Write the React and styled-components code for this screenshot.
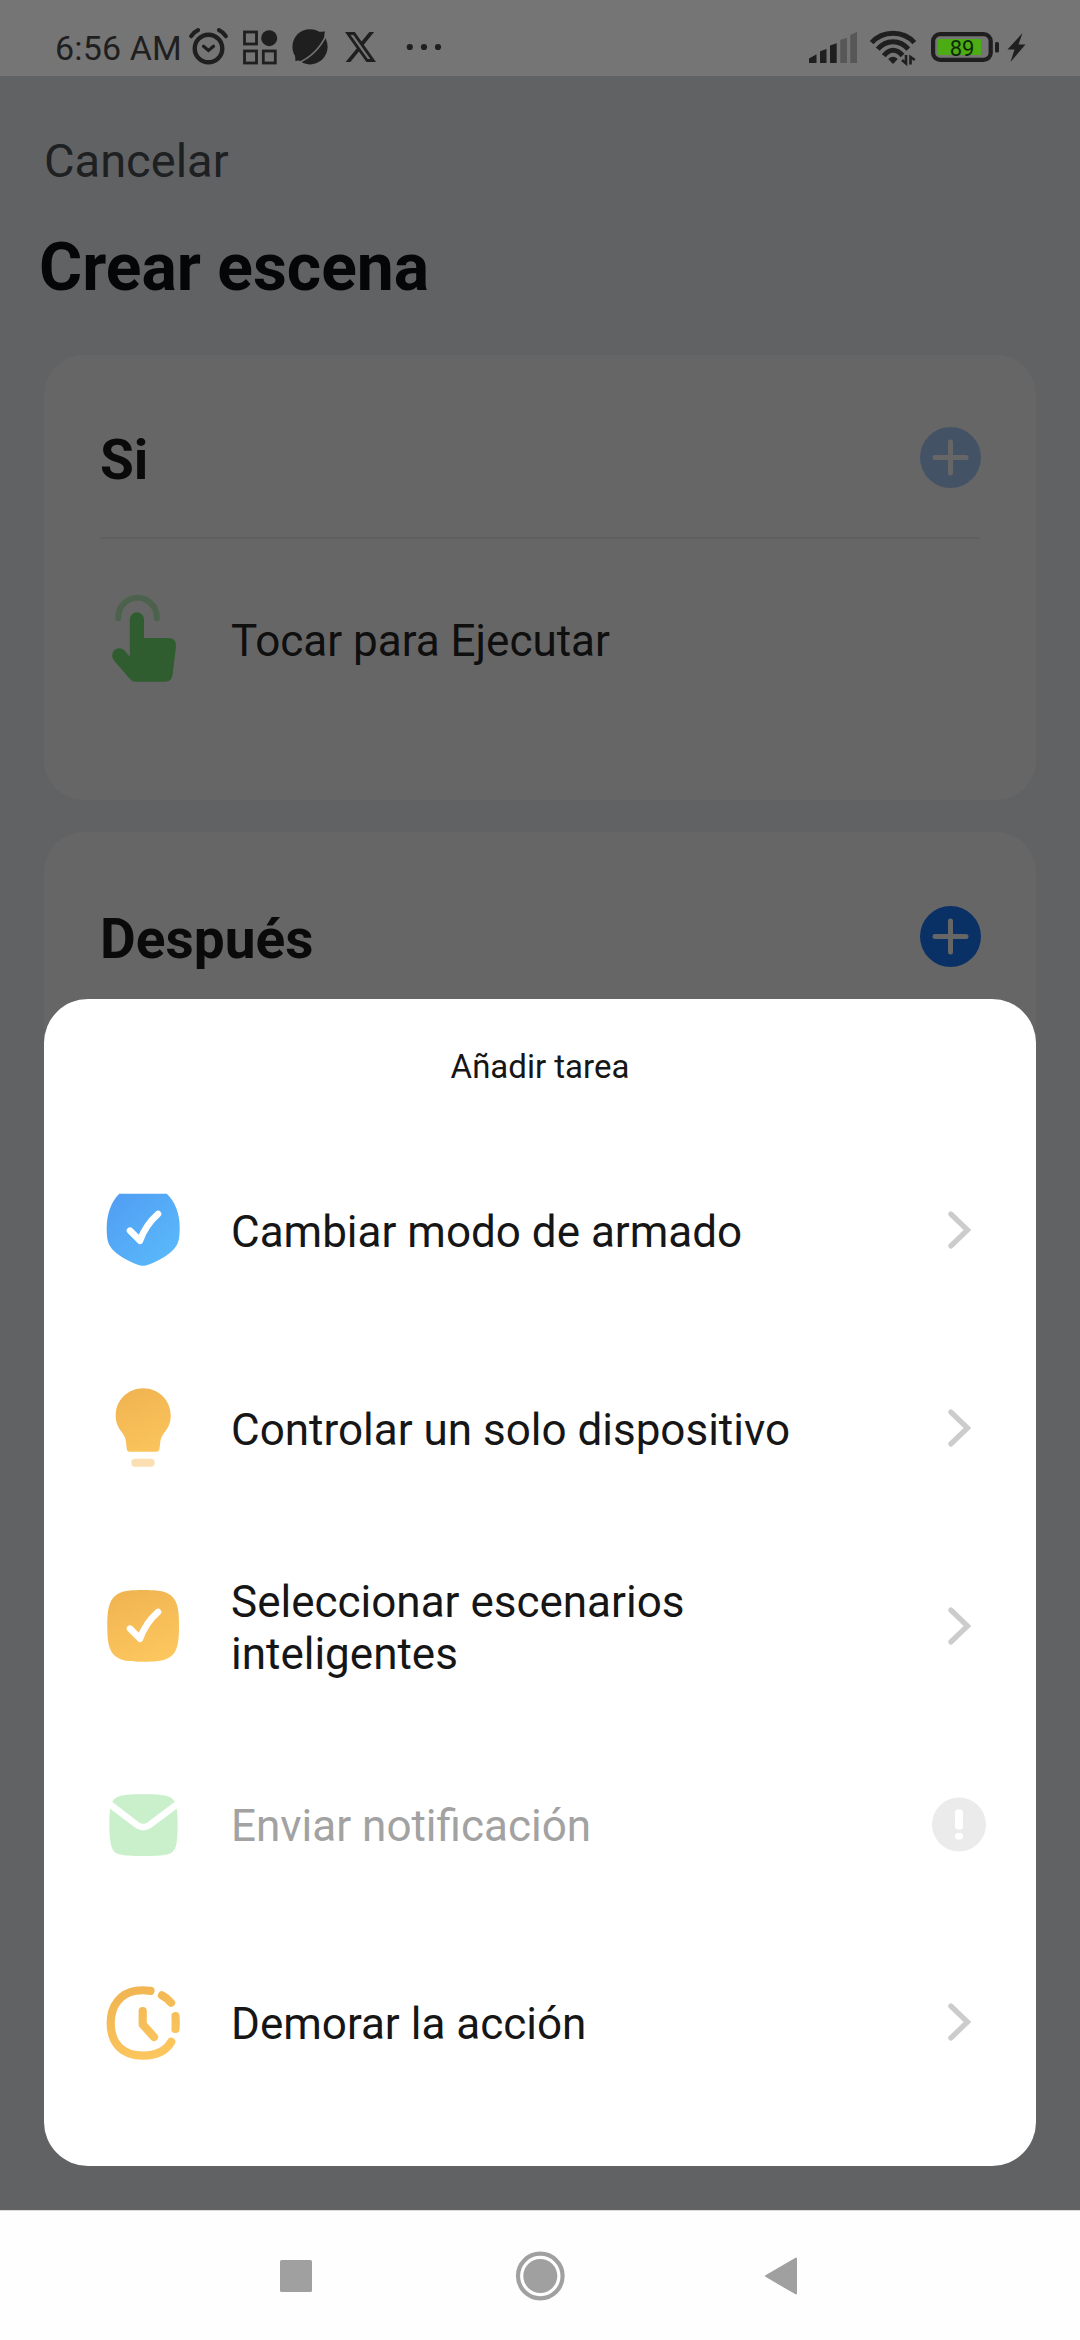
import React from 'react';
import styled, { createGlobalStyle } from 'styled-components';

const GlobalStyle = createGlobalStyle`
  * {
    box-sizing: border-box;
  }

  body {
    margin: 0;
    font-family: Roboto, 'Noto Sans', sans-serif;
    background: #ffffff;
  }
`;

// Styled Components
const Screen = styled.div`
  width: 1080px;
  height: 2340px;
  display: flex;
  flex-direction: column;
  overflow: hidden;
`;

const StatusBar = styled.header`
  height: 76px;
  flex: none;
  display: flex;
  justify-content: space-between;
  padding: 28px 54px 0 55px;
  background: #757575;
  color: #1f1f1f;
`;

const StatusGroup = styled.div`
  display: flex;
  height: 38px;
  align-items: center;
`;

const Clock = styled.span`
  width: 134px;
  padding-top: 2px;
  font-size: 34px;
  line-height: 40px;
  letter-spacing: 0.15px;
  white-space: nowrap;
`;

const Page = styled.main`
  position: relative;
  flex: 1;
  min-height: 0;
  overflow: hidden;
  padding: 0 44px;
  background: #f2f5fa;
`;

const CancelButton = styled.button`
  display: block;
  margin: 57px 0 0;
  padding: 0;
  border: none;
  background: none;
  color: #4e5156;
  font-family: inherit;
  font-size: 47px;
  line-height: 56px;
`;

const PageTitle = styled.h1`
  margin: 41px 0 50px -5px;
  color: #0d0f12;
  font-size: 66px;
  line-height: 75px;
  font-weight: 700;
`;

const Card = styled.section`
  height: ${props => props.$height}px;
  margin-bottom: 32px;
  padding: 0 56px;
  border-radius: 40px;
  background: #ffffff;
`;

const CardHeader = styled.div`
  display: flex;
  align-items: center;
  justify-content: space-between;
  height: 184px;
  padding-top: ${props => (props.$divided ? 23 : 27)}px;
  border-bottom: 2px solid ${props => (props.$divided ? '#eeeeef' : 'transparent')};
`;

const CardTitle = styled.h2`
  margin: 0;
  padding-top: 5px;
  color: #191919;
  font-size: 55px;
  line-height: 64px;
  font-weight: 700;
`;

const AddButton = styled.button`
  width: 61px;
  height: 61px;
  margin: 0 -1px 0 0;
  padding: 0;
  border: none;
  border-radius: 50%;
  background: ${props => (props.$muted ? '#aaccff' : '#1a7bff')};
  color: #ffffff;
`;

const ConditionRow = styled.div`
  display: flex;
  align-items: center;
  height: 198px;
`;

const ConditionText = styled.span`
  margin-left: 43px;
  padding-top: 5px;
  color: #262626;
  font-size: 44px;
`;

const Scrim = styled.div`
  position: absolute;
  inset: 0;
  display: flex;
  align-items: flex-end;
  padding: 0 44px 44px;
  background: rgba(0, 0, 0, 0.6);
`;

const Sheet = styled.div`
  width: 992px;
  height: 1167px;
  border-radius: 44px;
  background: #ffffff;
`;

const SheetTitle = styled.div`
  height: 132px;
  padding-top: 2px;
  color: #161616;
  font-size: 33px;
  line-height: 132px;
  text-align: center;
`;

const TaskRow = styled.div`
  display: flex;
  align-items: center;
  height: 198px;
  padding: 0 50px 0 55px;
`;

const TaskLabel = styled.span`
  width: 640px;
  margin-left: 44px;
  padding-top: 4px;
  color: ${props => (props.$disabled ? '#a2a2a2' : '#161616')};
  font-size: 44px;
  line-height: 52px;
`;

const Trailing = styled.div`
  display: flex;
  margin-left: auto;
`;

const NavBar = styled.nav`
  display: flex;
  flex: none;
  align-items: center;
  justify-content: center;
  gap: 194px;
  height: 130px;
  border-top: 1px solid #dcdcdc;
  background: #fefefe;
`;

const Icon = styled.svg`
  display: block;
  flex: none;
  overflow: visible;
  margin-left: ${props => props.$left || 0}px;
`;

// Status bar icons
const AlarmIcon = () => (
  <Icon width="40" height="38" fill="none" stroke="currentColor" strokeLinecap="round">
    <circle cx="19.5" cy="20.5" r="13.8" strokeWidth="4.4" />
    <path d="M2.2 8.2Q5 4 9 2.2M30 2.2Q34 4 36.8 8.2" strokeWidth="4.2" />
    <path d="M14.5 18.2L19.5 22.5L24.5 18.2" strokeWidth="3.2" />
  </Icon>
);

const GridIcon = () => (
  <Icon width="34" height="38" $left={14} fill="none" stroke="currentColor" strokeWidth="2.8">
    <rect x="1.5" y="4" width="12" height="12" />
    <rect x="1.5" y="23" width="12" height="12" />
    <rect x="20.3" y="23" width="12" height="12" />
    <circle cx="26.2" cy="10.2" r="8" fill="currentColor" stroke="none" />
  </Icon>
);

const PlanetIcon = () => (
  <Icon width="36" height="38" $left={15}>
    <circle cx="18" cy="18.8" r="17.6" fill="currentColor" />
    <path d="M26 4L33 3.6Q32.5 9 30 14L9 32L3.4 33L3 25Z" fill="currentColor" />
    <path d="M34.5 6.5C28 21 18 30 5 35.5" fill="none" stroke="#757575" strokeWidth="1.7" />
  </Icon>
);

const XLogo = () => (
  <Icon width="31" height="30" $left={17} viewBox="1.25 2.25 21.6 19.5" preserveAspectRatio="none">
    <path
      fill="currentColor"
      d="M18.244 2.25h3.308l-7.227 8.26 8.502 11.24H16.17l-5.214-6.817L4.99 21.75H1.68l7.73-8.835L1.254 2.25H8.08l4.713 6.231zm-1.161 17.52h1.833L7.084 4.126H5.117z"
    />
  </Icon>
);

const MoreDots = () => (
  <Icon width="36" height="38" $left={30} fill="currentColor">
    <circle cx="3.8" cy="19" r="3.1" />
    <circle cx="18" cy="19" r="3.1" />
    <circle cx="32" cy="19" r="3.1" />
  </Icon>
);

const SignalIcon = () => (
  <Icon width="48" height="38" fill="currentColor">
    <path d="M0 35V30.5L7.5 26.3V35Z" />
    <path d="M11 35V23.2L17.5 21V35Z" />
    <path d="M21 35V17.5L27.7 15.2V35Z" />
    <path d="M31.3 35V12L38 9.7V35ZM41.3 35V7L48 4V35Z" fill="#575757" />
  </Icon>
);

const WifiIcon = () => (
  <Icon width="47" height="38" $left={13} fill="none" stroke="currentColor" strokeWidth="5">
    <path d="M1.7 14.6Q10 5.2 23 5.2Q36 5.2 44.3 14.6" />
    <path d="M7.7 21.2Q14 13.7 23 13.7Q32 13.7 38.3 21.2" />
    <path d="M13.8 27.8Q18 22.2 23 22.2Q28 22.2 32.6 27.5" />
    <path d="M18.2 31Q23 26.5 27.8 31L23 36Z" fill="currentColor" stroke="none" />
    <path d="M36 27V35.5L32 32M40.5 36.5V29L44.8 32" strokeWidth="2.6" />
  </Icon>
);

const BatteryIcon = () => (
  <Icon width="69" height="38" $left={14}>
    <rect x="2.1" y="6.1" width="57.6" height="25.8" rx="7" fill="none" stroke="currentColor" strokeWidth="4.2" />
    <rect x="7" y="11" width="43" height="16" fill="#4dab14" />
    <rect x="64" y="14" width="4" height="10.5" rx="1.5" fill="currentColor" />
    <text x="31" y="28" textAnchor="middle" fontSize="22" fill="#0d2a06">89</text>
  </Icon>
);

const BoltIcon = () => (
  <Icon width="19" height="38" $left={7}>
    <path d="M15.5 5L0.5 21.5H7.5L3.5 34L18.5 16.5H11.5Z" fill="currentColor" />
  </Icon>
);

// Page icons
const PlusIcon = () => (
  <Icon width="61" height="61" stroke="currentColor" strokeWidth="5" strokeLinecap="round">
    <path d="M15 30.5H46M30.5 15V46" />
  </Icon>
);

const TouchIcon = () => (
  <Icon width="88" height="88" viewBox="0 0 88 88">
    <path d="M18.3 24.2V22.9A19.2 19.2 0 0 1 56.7 22.9V24.2" fill="none" stroke="#bdf5bd" strokeWidth="6" strokeLinecap="round" />
    <path
      d="M29.800 25.400A7.100 7.100 0 0 1 44 25.400V44H68Q76.800 44 76 53L72.500 81Q71.500 87.700 65.500 87.700H35.500Q31.500 87.700 29 84L14 66.500Q10.500 61.500 13.500 57C17.500 52.500 23 54 25.500 57.500L29.800 63Z"
      fill="#78e878"
    />
  </Icon>
);

// Sheet icons
const Gradients = () => (
  <defs>
    <linearGradient id="blue" x1="0" y1="0" x2="1" y2="1">
      <stop offset="0" stopColor="#509cf3" />
      <stop offset="1" stopColor="#5bbcfb" />
    </linearGradient>
    <linearGradient id="amber" gradientUnits="userSpaceOnUse" x1="20" y1="4" x2="50" y2="84">
      <stop offset="0" stopColor="#efb350" />
      <stop offset="1" stopColor="#fdc75f" />
    </linearGradient>
  </defs>
);

const TaskIcon = ({ children }) => (
  <Icon width="88" height="88" viewBox="0 0 88 88" fill="none">
    <Gradients />
    {children}
  </Icon>
);

const Tick = ({ y = 0 }) => (
  <path
    d="M31 44.700L41 54.700Q46.500 39 59 28"
    transform={`translate(0 ${y})`}
    stroke="#ffffff"
    strokeWidth="6.6"
    strokeLinecap="round"
    strokeLinejoin="round"
  />
);

const ShieldIcon = () => (
  <TaskIcon>
    <path
      d="M20.300 7.700H67.700C76 15.500 80.700 27 80.700 42C80.700 54 79 59 73.500 64.500C67 71 55 77 47.500 79.300Q44 80.300 40.500 79.300C33 77 21 71 14.500 64.500C9 59 7.700 54 7.700 42C7.700 27 12.500 15.500 20.300 7.700Z"
      fill="url(#blue)"
    />
    <Tick />
  </TaskIcon>
);

const BulbIcon = () => (
  <TaskIcon>
    <path
      d="M44.200 4.300C60 4.300 71.700 16.500 71.700 31.500C71.700 38.500 69.500 43.500 65.500 48.500C62 53 61.300 56 61 61L60.500 64.500Q60 67.700 57 67.700H31Q28 67.700 27.700 64.500L27.300 61C27 56 26.300 53 23 48.500C19 43.500 16.700 38.500 16.700 31.500C16.700 16.500 28.500 4.300 44.200 4.300Z"
      fill="url(#amber)"
    />
    <rect x="32.300" y="74.700" width="23.400" height="8" rx="4" fill="#fbdfb2" />
  </TaskIcon>
);

const ScenarioIcon = () => (
  <TaskIcon>
    <path
      d="M44.200 8C56 8 63 8.800 68 11C73 13.300 76 17 77.700 22C79.400 27 80 33 80 44C80 55 79.400 61 77.700 66C76 71 73 74.500 68 76.700C63 79 56 79.700 44.200 79.700C32 79.700 25.500 79 20.500 76.700C15.500 74.500 12.500 71 10.700 66C9 61 8.300 55 8.300 44C8.300 33 9 27 10.700 22C12.500 17 15.500 13.300 20.500 11C25.500 8.800 32 8 44.200 8Z"
      fill="url(#amber)"
    />
    <Tick y={2} />
  </TaskIcon>
);

const MailIcon = () => (
  <TaskIcon>
    <path
      d="M44.300 14.300C58 14.300 65 14.800 70.500 17C75 19 77 23 77.700 28C79 38 79 52 77.700 62C76.800 69 74 73 69 74.300C62 75.800 55 76 44.300 76C33 76 27 75.800 20 74.300C15 73 12.500 69 11.500 62C10 52 10 38 11.200 28C12 23 14 19 18.500 17C24 14.800 31 14.300 44.300 14.300Z"
      fill="#c9f0cb"
    />
    <path d="M8.500 22.500L38.500 45.300Q44.300 49 50 45.300L80.500 22.500" stroke="#ffffff" strokeWidth="6.600" />
  </TaskIcon>
);

const TimerIcon = () => (
  <TaskIcon>
    <g stroke="url(#amber)" strokeWidth="8.200" strokeLinecap="round" strokeLinejoin="round">
      <path d="M51.500 12.900C47 12.200 41 12.100 37 12.800C22 15 11.700 27 11.700 45C11.700 65 23 77.600 44 77.600C57 77.600 66.500 73.500 72.200 63.800" />
      <path d="M63 17.400Q68.500 20.300 72 24.700" />
      <path d="M76.500 38Q77 44.500 76.500 51" />
      <path d="M43.700 33V46.500L55 59" />
    </g>
  </TaskIcon>
);

const ChevronIcon = () => (
  <Icon width="54" height="54" viewBox="0 0 54 54" fill="none">
    <path d="M18.800 11L35.500 27L18.800 43" stroke="#cccccc" strokeWidth="5.200" strokeLinecap="round" />
  </Icon>
);

const WarningIcon = () => (
  <Icon width="54" height="54" viewBox="0 0 54 54">
    <circle cx="27" cy="27.500" r="27" fill="#ebebeb" />
    <rect x="23" y="12.500" width="8" height="20" rx="3" fill="#ffffff" />
    <rect x="23" y="36" width="8" height="6.500" rx="3" fill="#ffffff" />
  </Icon>
);

const tasks = [
  { label: 'Cambiar modo de armado', icon: <ShieldIcon /> },
  { label: 'Controlar un solo dispositivo', icon: <BulbIcon /> },
  { label: 'Seleccionar escenarios inteligentes', icon: <ScenarioIcon /> },
  { label: 'Enviar notificación', icon: <MailIcon />, disabled: true },
  { label: 'Demorar la acción', icon: <TimerIcon /> },
];

const App = () => {
  return (
    <Screen>
      <GlobalStyle />
      <StatusBar>
        <StatusGroup>
          <Clock>6:56 AM</Clock>
          <AlarmIcon />
          <GridIcon />
          <PlanetIcon />
          <XLogo />
          <MoreDots />
        </StatusGroup>
        <StatusGroup>
          <SignalIcon />
          <WifiIcon />
          <BatteryIcon />
          <BoltIcon />
        </StatusGroup>
      </StatusBar>

      <Page>
        <CancelButton>Cancelar</CancelButton>
        <PageTitle>Crear escena</PageTitle>
        <Card $height={445}>
          <CardHeader $divided>
            <CardTitle>Si</CardTitle>
            <AddButton $muted>
              <PlusIcon />
            </AddButton>
          </CardHeader>
          <ConditionRow>
            <TouchIcon />
            <ConditionText>Tocar para Ejecutar</ConditionText>
          </ConditionRow>
        </Card>
        <Card $height={445}>
          <CardHeader>
            <CardTitle>Después</CardTitle>
            <AddButton>
              <PlusIcon />
            </AddButton>
          </CardHeader>
        </Card>

        <Scrim>
          <Sheet>
            <SheetTitle>Añadir tarea</SheetTitle>
            {tasks.map(task => (
              <TaskRow key={task.label}>
                {task.icon}
                <TaskLabel $disabled={task.disabled}>{task.label}</TaskLabel>
                <Trailing>
                  {task.disabled ? <WarningIcon /> : <ChevronIcon />}
                </Trailing>
              </TaskRow>
            ))}
          </Sheet>
        </Scrim>
      </Page>

      <NavBar>
        <Icon width="50" height="50" fill="#a0a0a0">
          <rect x="9" y="9" width="32" height="32" rx="1.500" />
        </Icon>
        <Icon width="50" height="50">
          <circle cx="25.300" cy="25" r="22.300" fill="none" stroke="#a0a0a0" strokeWidth="4.200" />
          <circle cx="25.300" cy="25" r="17" fill="#a0a0a0" />
        </Icon>
        <Icon width="50" height="50" fill="#a0a0a0" stroke="#a0a0a0" strokeWidth="2" strokeLinejoin="round">
          <path d="M7 25L37 7.500V42.500Z" />
        </Icon>
      </NavBar>
    </Screen>
  );
};

export default App;
